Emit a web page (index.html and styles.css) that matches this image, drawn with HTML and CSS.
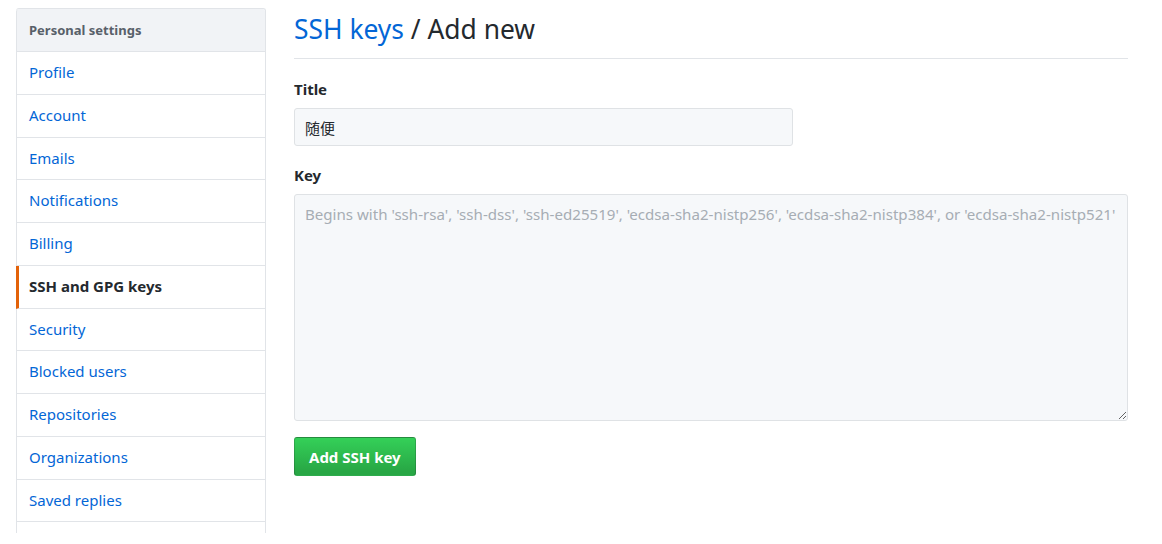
FILE: index.html
```html
<!DOCTYPE html>
<html lang="en">
<head>
<meta charset="utf-8">
<title>SSH keys / Add new</title>
<link rel="stylesheet" href="styles.css">
</head>
<body>
<div class="page">
  <nav class="menu">
    <h3 class="menu-heading">Personal settings</h3>
    <a class="menu-item" href="#">Profile</a>
    <a class="menu-item" href="#">Account</a>
    <a class="menu-item" href="#">Emails</a>
    <a class="menu-item" href="#">Notifications</a>
    <a class="menu-item" href="#">Billing</a>
    <a class="menu-item selected" href="#">SSH and GPG keys</a>
    <a class="menu-item" href="#">Security</a>
    <a class="menu-item" href="#">Blocked users</a>
    <a class="menu-item" href="#">Repositories</a>
    <a class="menu-item" href="#">Organizations</a>
    <a class="menu-item" href="#">Saved replies</a>
    <div class="menu-item menu-rest"></div>
  </nav>
  <main class="content">
    <h2 class="subhead"><a href="#">SSH keys</a> / Add new</h2>
    <form class="form">
      <label class="label" for="title">Title</label>
      <input class="input" id="title" type="text" value="随便">
      <label class="label" for="key">Key</label>
      <textarea class="textarea" id="key" wrap="off" placeholder="Begins with 'ssh-rsa', 'ssh-dss', 'ssh-ed25519', 'ecdsa-sha2-nistp256', 'ecdsa-sha2-nistp384', or 'ecdsa-sha2-nistp521'"></textarea>
      <div class="actions"><button class="btn" type="button">Add SSH key</button></div>
    </form>
  </main>
</div>
</body>
</html>
```
FILE: styles.css
```css
* { box-sizing: border-box; }
html, body { margin: 0; padding: 0; background: #fff; }
body {
  font-family: "Noto Sans", "Open Sans", "Noto Sans CJK SC", sans-serif;
  font-size: 15px;
  color: #24292e;
}
a { text-decoration: none; color: #0366d6; }

.page {
  display: flex;
  align-items: flex-start;
  gap: 28px;
  padding: 8px 34px 0 16px;
}

.menu {
  flex: 0 0 250px;
  display: flex;
  flex-direction: column;
  border: 1px solid #e1e4e8;
  border-left: none;
  border-bottom: none;
  border-radius: 3px 3px 0 0;
  height: 525px;
  overflow: hidden;
}
.menu-heading {
  flex: 0 0 43px;
  margin: 0;
  padding: 0 12px;
  display: flex;
  align-items: center;
  background: #f1f3f6;
  border-bottom: 1px solid #e1e4e8;
  border-left: 1px solid #e1e4e8;
  border-top-left-radius: 3px;
  color: #586069;
  font-size: 13px;
  font-weight: 700;
}
.menu-item {
  display: block;
  flex: 0 0 42.75px;
  line-height: 41.75px;
  border-bottom: 1px solid #e1e4e8;
  border-left: 1px solid #e1e4e8;
  padding: 0 12px;
  color: #0366d6;
  font-size: 15px;
}
.menu-item.selected {
  border-left: 3px solid #e36209;
  padding-left: 10px;
  color: #24292e;
  font-weight: 700;
}
.menu-rest { border-bottom: none; }

.content {
  flex: 1;
  min-width: 0;
}
.subhead {
  margin: 0;
  padding: 5px 0 13px;
  border-bottom: 1px solid #e1e4e8;
  font-size: 26.4px;
  font-weight: 400;
  line-height: 32px;
  color: #24292e;
}

.form {
  display: flex;
  flex-direction: column;
  align-items: flex-start;
  padding-top: 19px;
}
.label {
  font-weight: 700;
  font-size: 15px;
  line-height: 22px;
  margin-bottom: 8px;
}
.input {
  width: 499px;
  height: 38px;
  padding: 0 10px;
  margin-bottom: 18px;
  font-family: "Noto Sans CJK SC", "Noto Sans", sans-serif;
  font-size: 15px;
  color: #24292e;
  background: #f6f8fa;
  border: 1px solid #dfe2e5;
  border-radius: 3px;
  outline: none;
}
.textarea {
  width: 100%;
  height: 227px;
  padding: 8px 10px;
  font-family: "Noto Sans", sans-serif;
  font-size: 15.1px;
  line-height: 22px;
  color: #24292e;
  background: #f6f8fa;
  border: 1px solid #dfe2e5;
  border-radius: 3px;
  resize: both;
  overflow: hidden;
  outline: none;
}
.textarea::placeholder { color: #a6adb4; }

.actions { padding-top: 16px; }
.btn {
  height: 39px;
  padding: 0 14px;
  font-family: "Noto Sans", sans-serif;
  font-size: 15px;
  font-weight: 700;
  color: #fff;
  background: linear-gradient(#34d058, #28a745 90%);
  border: 1px solid rgba(27, 31, 35, 0.2);
  border-radius: 3px;
  cursor: pointer;
}
```
